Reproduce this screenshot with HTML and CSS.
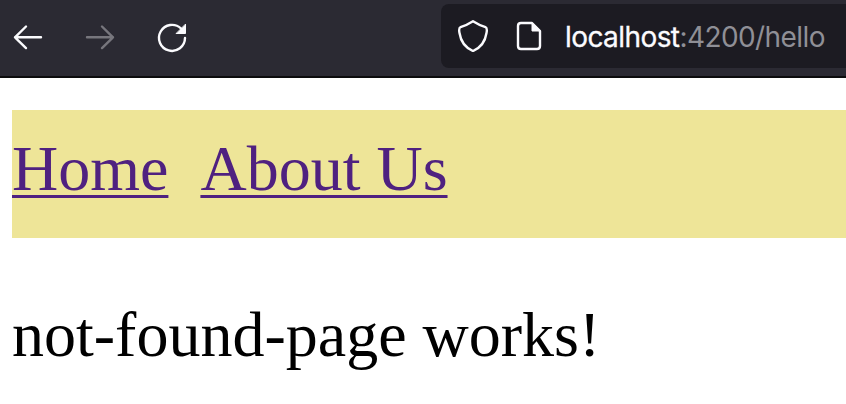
FILE: index.html
```html
<!DOCTYPE html>
<html lang="en">
<head>
<meta charset="utf-8">
<title>Hello</title>
<link rel="stylesheet" href="styles.css">
</head>
<body>
<header class="toolbar">
  <div class="controls">
    <svg class="icon" viewBox="0 0 32 32"><path d="M29 15.300H3M14 4.500L3 15.300l11 10.800"/></svg>
    <svg class="icon disabled" viewBox="0 0 32 32"><path d="M3 15.300h26M18 4.500l11 10.800-11 10.800"/></svg>
    <svg class="icon" viewBox="0 0 32 32"><path d="M29 16A13 13 0 1 1 25 6.500L27 9"/><path class="solid" d="M29.500 2.500v9H20.500z"/></svg>
  </div>
  <div class="address">
    <svg class="icon" viewBox="0 0 32 32"><path d="M16 1.200Q22 5 28.500 7.200Q30.500 8 29.500 13C28 23 23 28 16 31C9 28 4 23 2.500 13Q1.500 8 3.500 7.200Q10 5 16 1.200z"/></svg>
    <svg class="icon page-icon" viewBox="0 0 32 32"><path d="M8 3h11l8 8v15q0 3-3 3H8q-3 0-3-3V6q0-3 3-3z"/><path class="solid" d="M19 3v8h8z"/></svg>
    <span class="url"><span class="host">localhost</span>:4200/hello</span>
  </div>
</header>
<main>
  <nav><a href="#">Home</a><a href="#">About Us</a></nav>
  <p>not-found-page works!</p>
</main>
</body>
</html>
```
FILE: styles.css
```css
body { margin: 0; background: #fff; overflow: hidden; font-family: "Liberation Serif", serif; }
.toolbar { display: flex; justify-content: space-between; height: 78px; box-sizing: border-box; background: #2b2a33; border-bottom: 2px solid #0c0c0d; }
.controls { display: flex; gap: 40px; padding: 22px 0 0 12px; }
.icon { display: block; width: 32px; height: 32px; fill: none; stroke: #fbfbfe; stroke-width: 2.4; stroke-linecap: round; stroke-linejoin: round; }
.disabled { stroke: #77767d; }
.solid { fill: #fbfbfe; stroke-width: 1; }
.address { display: flex; align-items: center; box-sizing: border-box; width: 405px; height: 64px; margin-top: 4px; padding-left: 16px; border-radius: 8px 0 0 8px; background: #1c1b22; }
.page-icon { margin-left: 24px; }
.url { margin-left: 20px; padding-top: 2px; font: 28px/34px Inter, sans-serif; letter-spacing: -0.58px; color: #8f8f96; white-space: nowrap; }
.host { color: #fbfbfe; -webkit-text-stroke: 0.3px #fbfbfe; }
main { padding: 32px 0 0 12px; }
nav { display: flex; gap: 32px; height: 128px; box-sizing: border-box; padding-top: 22px; background: #eee598; font-size: 64px; line-height: 73px; }
a { color: #4f2180; text-decoration-thickness: 3px; text-underline-offset: 5px; }
p { margin: 60px 0 0; font-size: 64px; line-height: 73px; }
```
